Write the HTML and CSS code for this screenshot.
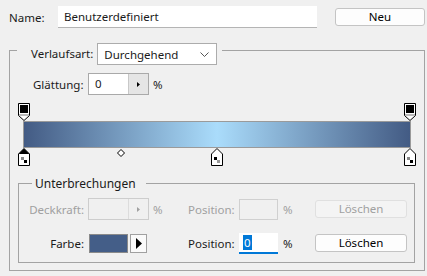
FILE: index.html
```html
<!DOCTYPE html>
<html lang="de">
<head>
    <meta charset="UTF-8">
    <title>Verlaufsumsetzung</title>
    <link rel="stylesheet" href="styles.css">
</head>
<body>
    <div class="name-row">
        <label class="name-label">Name:</label>
        <input class="name-input" type="text" value="Benutzerdefiniert">
        <button class="btn btn-new">Neu</button>
    </div>

    <fieldset class="group outer">
        <legend class="outer-legend">
            <span class="legend-label">Verlaufsart:</span>
            <span class="select">
                <span>Durchgehend</span>
                <svg width="9" height="5" viewBox="0 0 9 5"><polyline points="0.5,0.5 4.5,4.5 8.5,0.5" fill="none" stroke="#555"/></svg>
            </span>
        </legend>

        <div class="smooth">
            <label class="smooth-label">Glättung:</label>
            <span class="spin">
                <span class="spin-val">0</span>
                <span class="spin-arrow"><svg width="3" height="5" viewBox="0 0 3 5"><polygon points="0,0 3,2.5 0,5" fill="#000"/></svg></span>
            </span>
            <span class="pct">%</span>
        </div>

        <div class="ramp">
            <div class="stops stops-top">
                <svg class="stop" style="left:0%" width="12" height="18" viewBox="0 0 12 18">
                    <path d="M0.5 0.5H11.5V12.5L6 17.5L0.5 12.5Z" fill="#fff" stroke="#000"/>
                    <rect x="2" y="2" width="8" height="8" fill="#000"/>
                    <rect x="1" y="11" width="10" height="2" fill="#bbb"/>
                </svg>
                <svg class="stop" style="left:100%" width="12" height="18" viewBox="0 0 12 18">
                    <path d="M0.5 0.5H11.5V12.5L6 17.5L0.5 12.5Z" fill="#fff" stroke="#000"/>
                    <rect x="2" y="2" width="8" height="8" fill="#000"/>
                    <rect x="1" y="11" width="10" height="2" fill="#bbb"/>
                </svg>
            </div>
            <div class="bar"></div>
            <div class="stops stops-bottom">
                <svg class="stop" style="left:0%" width="12" height="18" viewBox="0 0 12 18">
                    <path d="M6 0.5L11.5 6V17.5H0.5V6Z" fill="#fff" stroke="#000"/>
                    <path d="M6 0.5L11.5 6H0.5Z" fill="#000"/>
                    <rect x="3" y="9" width="3" height="3" fill="#888"/>
                    <rect x="6" y="12" width="3" height="3" fill="#000"/>
                </svg>
                <svg class="mid" style="left:25%" width="8" height="8" viewBox="0 0 8 8">
                    <polygon points="4,0.5 7.5,4 4,7.5 0.5,4" fill="#fff" stroke="#000"/>
                </svg>
                <svg class="stop" style="left:50%" width="12" height="18" viewBox="0 0 12 18">
                    <path d="M6 0.5L11.5 6V17.5H0.5V6Z" fill="#fff" stroke="#000"/>
                    <rect x="3" y="9" width="3" height="3" fill="#000"/>
                    <rect x="6" y="12" width="3" height="3" fill="#999"/>
                </svg>
                <svg class="stop" style="left:100%" width="12" height="18" viewBox="0 0 12 18">
                    <path d="M6 0.5L11.5 6V17.5H0.5V6Z" fill="#fff" stroke="#000"/>
                    <rect x="3" y="9" width="3" height="3" fill="#888"/>
                    <rect x="6" y="12" width="3" height="3" fill="#000"/>
                </svg>
            </div>
        </div>

        <fieldset class="group inner">
            <legend class="inner-legend">Unterbrechungen</legend>

            <div class="row disabled">
                <span class="lbl">Deckkraft:</span>
                <span class="spin">
                    <span class="spin-val"></span>
                    <span class="spin-arrow"><svg width="3" height="5" viewBox="0 0 3 5"><polygon points="0,0 3,2.5 0,5" fill="#a0a0a0"/></svg></span>
                </span>
                <span class="pct">%</span>
                <span class="pos-lbl">Position:</span>
                <span class="field"></span>
                <span class="pct2">%</span>
                <button class="btn btn-del" disabled>Löschen</button>
            </div>

            <div class="row row-color">
                <span class="lbl">Farbe:</span>
                <span class="color">
                    <span class="swatch"></span>
                    <span class="color-arrow"><svg width="6" height="11" viewBox="0 0 6 11"><polygon points="0,0 6,5.5 0,11" fill="#000"/></svg></span>
                </span>
                <span class="pct"></span>
                <span class="pos-lbl">Position:</span>
                <span class="field focus"><span class="sel">0</span></span>
                <span class="pct2">%</span>
                <button class="btn btn-del">Löschen</button>
            </div>
        </fieldset>
    </fieldset>
</body>
</html>
```

FILE: styles.css
```css
body {
    margin: 0;
    background: #f0f0f0;
    font-family: "Noto Sans", sans-serif;
    font-size: 11.5px;
    color: #1a1a1a;
}
.name-row {
    display: flex;
    align-items: center;
    padding: 6px 0 0 9px;
}
.name-label {
    width: 49px;
}
.name-input {
    width: 259px;
    height: 22px;
    box-sizing: border-box;
    border: none;
    border-bottom: 1px solid #b4b4b4;
    background: #fff;
    padding: 0 6px;
    font: inherit;
    color: inherit;
    outline: none;
}
.btn {
    box-sizing: border-box;
    height: 18px;
    padding: 0;
    border: 1px solid #c4c4c4;
    border-radius: 3px;
    background: #fdfdfd;
    font: inherit;
    color: #000;
    line-height: 16px;
    text-align: center;
}
.btn-new {
    width: 90px;
    margin-left: 18px;
}
.group {
    border: 1px solid #a3a3a3;
    margin: 0;
    padding: 0;
    min-width: 0;
    box-sizing: border-box;
}
.outer {
    width: 416px;
    margin: 15px 0 0 9px;
    padding: 15px 0 7px;
}
.outer-legend {
    margin-left: 7px;
    padding: 0 5px 0 14px;
    height: 15px;
    display: flex;
    align-items: flex-start;
}
.legend-label {
    line-height: 22px;
}
.select {
    width: 120px;
    height: 22px;
    box-sizing: border-box;
    margin-left: 4px;
    border: 1px solid #acacac;
    background: #fff;
    display: flex;
    align-items: center;
    justify-content: space-between;
    padding: 0 7px 0 6px;
}
.smooth {
    display: flex;
    align-items: center;
    height: 22px;
    padding-left: 23px;
}
.smooth-label {
    width: 55px;
}
.spin {
    display: flex;
    width: 61px;
    height: 22px;
    box-sizing: border-box;
    border: 1px solid #a9a9a9;
    background: #fff;
}
.spin-val {
    flex: 1;
    padding-left: 6px;
    line-height: 20px;
}
.spin-arrow {
    width: 19px;
    border-left: 1px solid #c8c8c8;
    background: #e5e5e5;
    display: flex;
    align-items: center;
    justify-content: center;
}
.pct {
    margin-left: 4px;
}
.ramp {
    width: 388px;
    margin: 8px 0 0 13px;
}
.stops {
    position: relative;
    margin: 0 1px;
}
.stops-top {
    height: 18px;
}
.stops-bottom {
    height: 19px;
}
.stop,
.mid {
    position: absolute;
    top: 0;
    transform: translateX(-50%);
    display: block;
}
.mid {
    top: 1px;
}
.bar {
    height: 27px;
    box-sizing: border-box;
    border: 1px solid #9a9a9a;
    background: linear-gradient(to right, #435b84, #aadcfb 50%, #435b84);
}
.inner {
    margin: 9px 9px 0 8px;
    padding: 7px 0 8px;
}
.inner-legend {
    margin-left: 13px;
    padding: 0 10px 0 3px;
    line-height: 15px;
    font-size: 12px;
}
.row {
    display: flex;
    align-items: center;
    height: 22px;
}
.row-color {
    margin-top: 12px;
}
.lbl {
    width: 65px;
    margin-right: 4px;
    text-align: right;
}
.row .pct {
    width: 35px;
}
.pos-lbl {
    width: 51px;
}
.field {
    width: 39px;
    height: 21px;
    box-sizing: border-box;
    background: #fff;
    display: flex;
    align-items: center;
    padding-left: 4px;
}
.pct2 {
    width: 32px;
    margin-left: 5px;
}
.btn-del {
    width: 92px;
}
.disabled {
    color: #a0a0a0;
}
.disabled .spin {
    border-color: #cdcdcd;
    background: #f0f0f0;
}
.disabled .spin-arrow {
    background: #f0f0f0;
    border-left-color: #dcdcdc;
}
.disabled .field {
    border: 1px solid #d0d0d0;
    background: #f0f0f0;
}
.disabled .btn {
    color: #a0a0a0;
    background: #f4f4f4;
    border-color: #e0e0e0;
}
.color {
    display: flex;
    gap: 2px;
    width: 61px;
    box-sizing: border-box;
    padding-left: 1px;
}
.swatch {
    width: 39px;
    height: 19px;
    box-sizing: border-box;
    border: 1px solid #8a8a8a;
    background: #445e88;
}
.color-arrow {
    width: 17px;
    height: 19px;
    box-sizing: border-box;
    border: 1px solid #a0a0a0;
    background: #fafafa;
    display: flex;
    align-items: center;
    justify-content: center;
}
.field.focus {
    border-bottom: 2px solid #0078d7;
}
.sel {
    background: #0078d7;
    color: #fff;
    line-height: 15px;
    padding: 0 1px;
}
```
